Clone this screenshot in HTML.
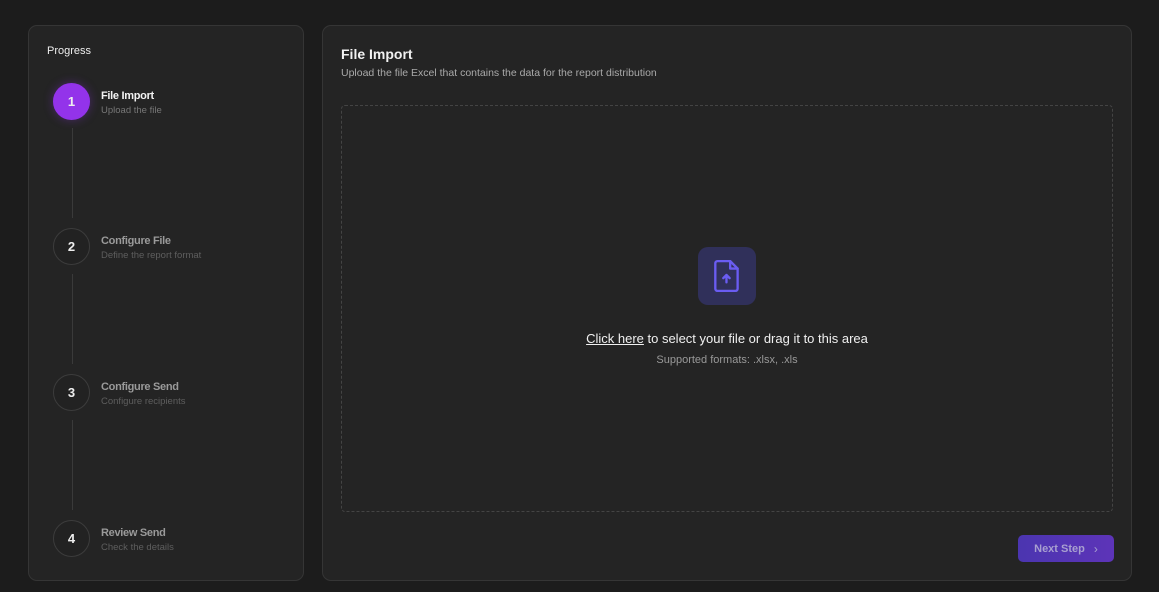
<!DOCTYPE html>
<html><head><meta charset="utf-8"><style>
*{box-sizing:border-box;margin:0;padding:0}
body{width:1159px;height:592px;background:#1c1c1c;font-family:"Liberation Sans",sans-serif;position:relative;overflow:hidden;color:#fff}
.card{position:absolute;background:#242424;border:1px solid #353535;border-radius:9px}
.side{left:28px;top:25px;width:276px;height:556px}
.main{left:322px;top:25px;width:810px;height:556px}
.t{position:absolute;white-space:nowrap}
.circ{position:absolute;left:24px;width:37px;height:37px;border-radius:50%;border:1px solid #3c3c3c;color:#eee;font-weight:bold;font-size:13px;display:flex;align-items:center;justify-content:center;background:#222}
.line{position:absolute;left:43px;width:1px;background:#3a3a3a}
.st{left:72px;font-size:11px;font-weight:bold;color:#9a9a9a;letter-spacing:-0.3px}
.sd{left:72px;font-size:9.5px;color:#5e5e5e}
</style></head><body>
<div class="card side">
<div class="t" style="left:18px;top:19px;font-size:11px;color:#eee">Progress</div>
<div class="circ" style="top:57px;background:#9333ea;border-color:#9333ea;box-shadow:0 0 10px rgba(147,51,234,.35)">1</div>
<div class="t st" style="top:64px;color:#f2f2f2">File Import</div>
<div class="t sd" style="top:79px;color:#777">Upload the file</div>
<div class="line" style="top:102px;height:90px"></div>
<div class="circ" style="top:202px">2</div>
<div class="t st" style="top:209px">Configure File</div>
<div class="t sd" style="top:224px">Define the report format</div>
<div class="line" style="top:248px;height:90px"></div>
<div class="circ" style="top:348px">3</div>
<div class="t st" style="top:355px">Configure Send</div>
<div class="t sd" style="top:370px">Configure recipients</div>
<div class="line" style="top:394px;height:90px"></div>
<div class="circ" style="top:494px">4</div>
<div class="t st" style="top:501px">Review Send</div>
<div class="t sd" style="top:516px">Check the details</div>
</div>
<div class="card main">
<div class="t" style="left:18px;top:20px;font-size:14px;font-weight:bold;color:#f2f2f2">File Import</div>
<div class="t" style="left:18px;top:41px;font-size:10.5px;color:#aaa">Upload the file Excel that contains the data for the report distribution</div>
<div style="position:absolute;left:18px;top:79px;width:772px;height:407px;border:1px dashed #444;border-radius:4px"></div>
<div style="position:absolute;left:375px;top:221px;width:58px;height:58px;border-radius:10px;background:#30305a;display:flex;align-items:center;justify-content:center">
<svg width="30" height="34" viewBox="0 0 28 32" fill="none" stroke="#6a5cf2" stroke-width="2.2" stroke-linejoin="round" stroke-linecap="round"><path d="M5 2h12l7 7v19a2 2 0 0 1-2 2H5a2 2 0 0 1-2-2V4a2 2 0 0 1 2-2z"/><path d="M17 2v7h7"/><path d="M13.5 22v-7M10.5 18l3-3 3 3"/></svg>
</div>
<div class="t" style="left:0;width:808px;text-align:center;top:305px;font-size:13px;color:#f0f0f0"><span style="text-decoration:underline">Click here</span> to select your file or drag it to this area</div>
<div class="t" style="left:0;width:808px;text-align:center;top:328px;font-size:11px;color:#999">Supported formats: .xlsx, .xls</div>
<div style="position:absolute;left:695px;top:509px;width:96px;height:27px;border-radius:5px;background:linear-gradient(90deg,#4b35b0,#5d34b8);color:#a89fd0;font-size:11px;font-weight:bold;display:flex;align-items:center;justify-content:center;gap:9px">Next Step <span style="font-weight:normal;font-size:12px">›</span></div>
</div>
</body></html>
